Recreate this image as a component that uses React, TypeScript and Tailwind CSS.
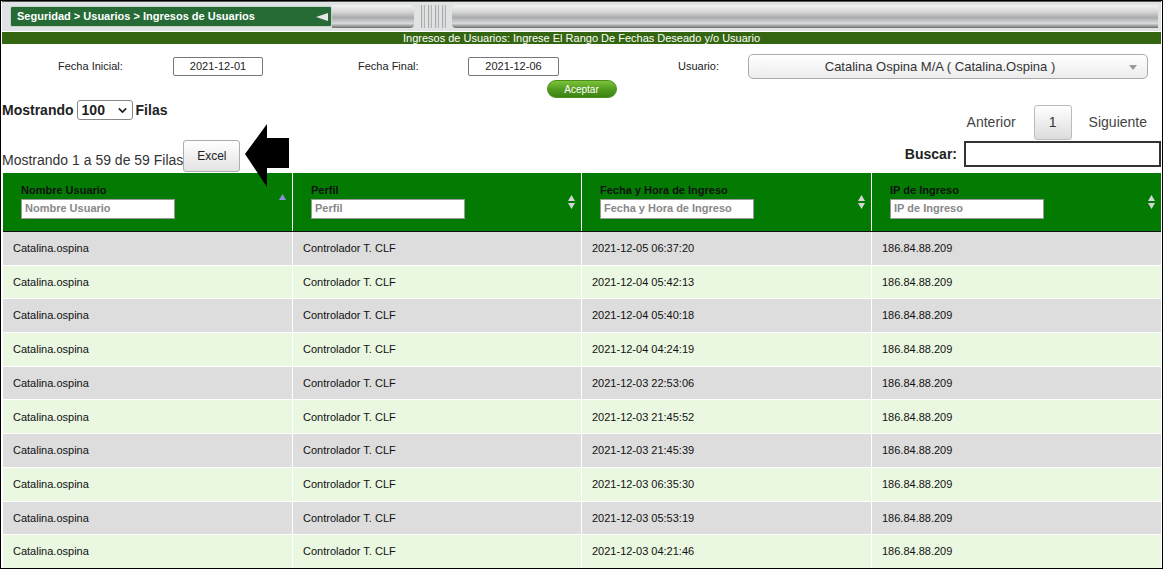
import { ChevronDown } from "lucide-react";

const rows = [
  ["Catalina.ospina", "Controlador T. CLF", "2021-12-05 06:37:20", "186.84.88.209"],
  ["Catalina.ospina", "Controlador T. CLF", "2021-12-04 05:42:13", "186.84.88.209"],
  ["Catalina.ospina", "Controlador T. CLF", "2021-12-04 05:40:18", "186.84.88.209"],
  ["Catalina.ospina", "Controlador T. CLF", "2021-12-04 04:24:19", "186.84.88.209"],
  ["Catalina.ospina", "Controlador T. CLF", "2021-12-03 22:53:06", "186.84.88.209"],
  ["Catalina.ospina", "Controlador T. CLF", "2021-12-03 21:45:52", "186.84.88.209"],
  ["Catalina.ospina", "Controlador T. CLF", "2021-12-03 21:45:39", "186.84.88.209"],
  ["Catalina.ospina", "Controlador T. CLF", "2021-12-03 06:35:30", "186.84.88.209"],
  ["Catalina.ospina", "Controlador T. CLF", "2021-12-03 05:53:19", "186.84.88.209"],
  ["Catalina.ospina", "Controlador T. CLF", "2021-12-03 04:21:46", "186.84.88.209"],
];

const columns = ["Nombre Usuario", "Perfil", "Fecha y Hora de Ingreso", "IP de Ingreso"];

function SortIcon({ active }: { active?: boolean }) {
  if (active) {
    return (
      <svg width="9" height="8" viewBox="0 0 9 8" className="mb-[8px]">
        <path d="M4.5 1 L8 7 L1 7 Z" fill="#8f8fe0" />
      </svg>
    );
  }
  return (
    <svg width="9" height="16" viewBox="0 0 9 16" className="mt-[3px]">
      <path d="M4.5 1 L8 7 L1 7 Z" fill="#d4d4d4" />
      <path d="M1 9 L8 9 L4.5 15 Z" fill="#d4d4d4" />
    </svg>
  );
}

function TopBar() {
  return (
    <div className="flex h-[30px] items-center bg-[#dfe3e4] pl-[8px] pr-[3px] border-t border-[#555]">
      <div className="flex h-[21px] w-[322px] items-center justify-between rounded-[2px] border border-[#c9d3cc] bg-[#266b35] pl-[6px] pr-[3px]">
        <span className="text-[11px] font-bold text-white">Seguridad &gt; Usuarios &gt; Ingresos de Usuarios</span>
        <svg width="12" height="8" viewBox="0 0 12 8">
          <path d="M0 4 L12 0 L12 8 Z" fill="#e8e8e8" />
        </svg>
      </div>
      <div className="flex h-[23px] flex-1 items-stretch">
        <div className="w-[82px] rounded-r-[4px] bg-[linear-gradient(#f2f2f2,#d6d6d6_30%,#a9abac_55%,#d9dadb_80%,#6e6e6e)]" />
        <div className="flex w-[38px] items-stretch justify-center gap-[3px] px-[2px]">
          <div className="w-[4px] bg-[linear-gradient(90deg,#8f9192,#f2f2f2,#9a9c9d)]" />
          <div className="w-[4px] bg-[linear-gradient(90deg,#8f9192,#f2f2f2,#9a9c9d)]" />
          <div className="w-[4px] bg-[linear-gradient(90deg,#8f9192,#f2f2f2,#9a9c9d)]" />
          <div className="w-[4px] bg-[linear-gradient(90deg,#8f9192,#f2f2f2,#9a9c9d)]" />
        </div>
        <div className="flex-1 rounded-l-[4px] bg-[linear-gradient(#f2f2f2,#d6d6d6_30%,#a9abac_55%,#d9dadb_80%,#6e6e6e)]" />
      </div>
    </div>
  );
}

function FilterRow() {
  return (
    <div className="pt-[10px] text-[11px] text-[#222]">
      <div className="flex h-[25px] items-center">
        <span className="w-[171px] pl-[56px]">Fecha Inicial:</span>
        <div className="flex h-[19px] w-[90px] items-center justify-center rounded-[2px] border border-[#777]">2021-12-01</div>
        <span className="w-[205px] pl-[95px]">Fecha Final:</span>
        <div className="flex h-[19px] w-[91px] items-center justify-center rounded-[2px] border border-[#777]">2021-12-06</div>
        <span className="w-[189px] pl-[119px]">Usuario:</span>
        <div className="relative flex h-[25px] w-[400px] items-center justify-center rounded-[5px] border border-[#aaa] bg-[linear-gradient(#ffffff,#ececec)] pr-[16px] text-[13px] text-[#333]">
          Catalina Ospina M/A ( Catalina.Ospina )
          <svg width="8" height="5" viewBox="0 0 8 5" className="absolute right-[10px] top-[10px]">
            <path d="M0 0 L8 0 L4 5 Z" fill="#999" />
          </svg>
        </div>
      </div>
      <div className="mt-[1px] flex justify-center">
        <button className="h-[18px] w-[70px] rounded-full border border-[#4d8d1f] bg-[linear-gradient(#7cc23a,#4f9a1d_55%,#3c8412)] text-[10px] text-white">
          Aceptar
        </button>
      </div>
    </div>
  );
}

function Controls() {
  return (
    <div className="relative flex h-[75px] justify-between text-[14px] text-[#333]">
      <div className="flex flex-col">
        <div className="mt-[2px] flex h-[20px] items-center gap-[3px] font-bold text-[#222]">
          <span>Mostrando</span>
          <div className="flex h-[20px] w-[56px] items-center justify-between rounded-[3px] border border-[#888] bg-white pl-[4px] pr-[3px]">
            <span>100</span>
            <ChevronDown size={13} strokeWidth={3} />
          </div>
          <span>Filas</span>
        </div>
        <div className="mt-[20px] flex items-end">
          <span className="mb-[1px]">Mostrando 1 a 59 de 59 Filas</span>
          <button className="h-[32px] w-[57px] rounded-[3px] border border-[#adadad] bg-[linear-gradient(#ffffff,#e3e3e3)] text-[12px] text-[#222]">
            Excel
          </button>
        </div>
      </div>
      <div className="flex flex-col items-end">
        <div className="mt-[7px] flex h-[35px] items-center">
          <span className="mr-[18px] text-[#444]">Anterior</span>
          <div className="flex h-[35px] w-[38px] items-center justify-center rounded-[3px] border border-[#bbb] bg-[linear-gradient(#ffffff,#dcdcdc)]">1</div>
          <span className="ml-[17px] mr-[14px] text-[#444]">Siguiente</span>
        </div>
        <div className="mt-[1px] flex items-center">
          <span className="mr-[7px] font-bold text-[#222]">Buscar:</span>
          <div className="h-[26px] w-[197px] border-2 border-[#333] bg-white" />
        </div>
      </div>
      <svg width="46" height="64" viewBox="0 0 46 64" className="absolute left-[242px] top-[26px]">
        <path d="M1 30 L23 0 L23 14 L45 14 L45 44 L23 44 L23 63 Z" fill="#000" />
      </svg>
    </div>
  );
}

function DataTable() {
  return (
    <div className="ml-px text-[11px] text-[#111]">
      <div className="grid grid-cols-[289px_288px_289px_289px] gap-x-px border-b border-[#111] bg-white">
        {columns.map((c, i) => (
          <div key={c} className="flex h-[58px] items-center justify-between bg-[#037b03] pb-[3px] pl-[18px] pr-[5px]">
            <div className="flex flex-col">
              <span className="font-bold leading-[14px] text-[#111]">{c}</span>
              <div className="mt-[2px] flex h-[20px] w-[154px] items-center border border-[#999] bg-white pl-[3px] font-bold text-[#888]">
                {c}
              </div>
            </div>
            <SortIcon active={i === 0} />
          </div>
        ))}
      </div>
      {rows.map((r, i) => (
        <div key={i} className="grid h-[33.7px] grid-cols-[289px_288px_289px_289px] gap-x-px border-b border-white bg-white">
          {r.map((cell, j) => (
            <div key={j} className={(i % 2 === 0 ? "bg-[#dddddd]" : "bg-[#eaf7e1]") + " flex items-center pl-[10px]"}>
              {cell}
            </div>
          ))}
        </div>
      ))}
    </div>
  );
}

export default function App() {
  return (
    <div className="h-[570px] w-[1165px] overflow-hidden bg-white font-['Liberation_Sans',Arial,sans-serif]">
      <div className="h-[569px] w-[1163px] overflow-hidden border border-black px-px">
        <TopBar />
        <div className="mt-px flex h-[12px] items-center justify-center bg-[#346611] text-[11px] leading-none text-white">
          Ingresos de Usuarios: Ingrese El Rango De Fechas Deseado y/o Usuario
        </div>
        <FilterRow />
        <Controls />
        <DataTable />
      </div>
    </div>
  );
}
